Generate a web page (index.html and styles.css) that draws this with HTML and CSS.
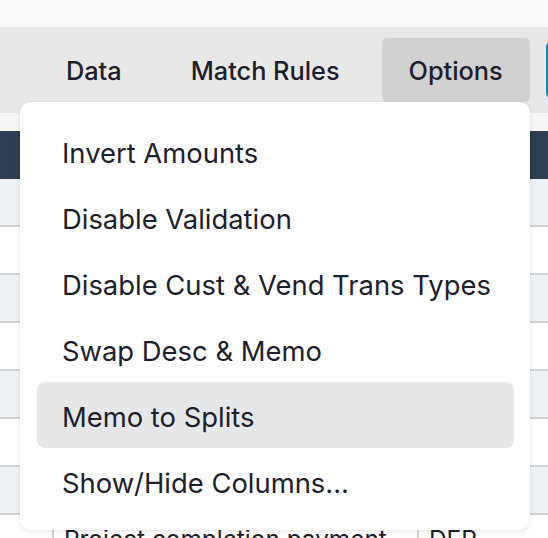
FILE: index.html
```html
<!DOCTYPE html>
<html>
<head>
<meta charset="utf-8">
<link rel="stylesheet" href="styles.css">
</head>
<body>
<div class="topstrip"></div>
<nav class="navbar">
  <button class="navbtn">Data</button>
  <button class="navbtn">Match Rules</button>
  <button class="navbtn active">Options</button>
  <button class="bluebtn"></button>
</nav>
<div class="subbar"></div>
<div class="table">
  <div class="thead"></div>
  <div class="row alt"><div class="c1"></div><div class="c2"></div><div class="c3"></div></div>
  <div class="row"><div class="c1"></div><div class="c2"></div><div class="c3"></div></div>
  <div class="row alt"><div class="c1"></div><div class="c2"></div><div class="c3"></div></div>
  <div class="row"><div class="c1"></div><div class="c2"></div><div class="c3"></div></div>
  <div class="row alt"><div class="c1"></div><div class="c2"></div><div class="c3"></div></div>
  <div class="row"><div class="c1"></div><div class="c2"></div><div class="c3"></div></div>
  <div class="row alt"><div class="c1"></div><div class="c2"></div><div class="c3"></div></div>
  <div class="row last"><div class="c1"></div><div class="c2 bordered">Project completion payment</div><div class="c3 bordered">DEP</div></div>
</div>
<div class="menu">
  <div class="item">Invert Amounts</div>
  <div class="item">Disable Validation</div>
  <div class="item">Disable Cust &amp; Vend Trans Types</div>
  <div class="item">Swap Desc &amp; Memo</div>
  <div class="item hover">Memo to Splits</div>
  <div class="item">Show/Hide Columns...</div>
</div>
</body>
</html>
```
FILE: styles.css
```css
html, body {
  margin: 0;
  padding: 0;
  width: 548px;
  height: 538px;
  overflow: hidden;
  background: #f9f9f9;
  font-family: Inter, "Noto Sans", sans-serif;
  color: #1d202b;
}
.topstrip {
  height: 27px;
  background: #f9f9f9;
}
.navbar {
  height: 86px;
  background: #e8e8e8;
  display: flex;
  align-items: center;
  padding-left: 39px;
  gap: 15px;
  box-sizing: border-box;
  white-space: nowrap;
  overflow: hidden;
}
.navbtn {
  height: 64px;
  border: none;
  background: transparent;
  font-family: inherit;
  font-size: 25.3px;
  font-weight: 500;
  color: #1d202b;
  padding: 0 27px 0;
  border-radius: 5px;
  flex: none;
}
.navbtn.active {
  background: #d1d1d1;
}
.bluebtn {
  flex: none;
  width: 80px;
  height: 58px;
  margin-left: 1px;
  border: 2px solid #1a84c8;
  border-radius: 6px;
  background: #f4f8fb;
}
.subbar {
  height: 18px;
  background: #f6f6f6;
}
.table {
  background: #fff;
}
.thead {
  height: 48px;
  background: #2d3e52;
}
.row {
  display: flex;
  height: 46px;
  border-bottom: 2px solid #d2d2d2;
  background: #fff;
  font-size: 24.4px;
}
.row.alt {
  background: #eef2f7;
}
.c1 {
  width: 52px;
  flex: none;
}
.c2 {
  width: 365px;
  flex: none;
  box-sizing: border-box;
  padding: 9px 10px 0;
  white-space: nowrap;
}
.c3 {
  flex: 1;
  box-sizing: border-box;
  padding: 9px 10px 0;
}
.bordered {
  border-left: 2px solid #d2d2d2;
}
.menu {
  position: absolute;
  left: 20px;
  top: 102px;
  width: 510px;
  height: 428px;
  box-sizing: border-box;
  padding: 16px 16px 16px 17px;
  background: #fff;
  border-radius: 10px;
  box-shadow: 0 2px 6px rgba(0,0,0,0.08), 0 0 1px rgba(0,0,0,0.12);
}
.item {
  height: 66px;
  box-sizing: border-box;
  display: flex;
  align-items: center;
  padding: 3px 0 0 25px;
  font-size: 27.4px;
  color: #1d202b;
  border-radius: 8px;
  white-space: nowrap;
}
.item.hover {
  background: #e6e7e9;
}
```
